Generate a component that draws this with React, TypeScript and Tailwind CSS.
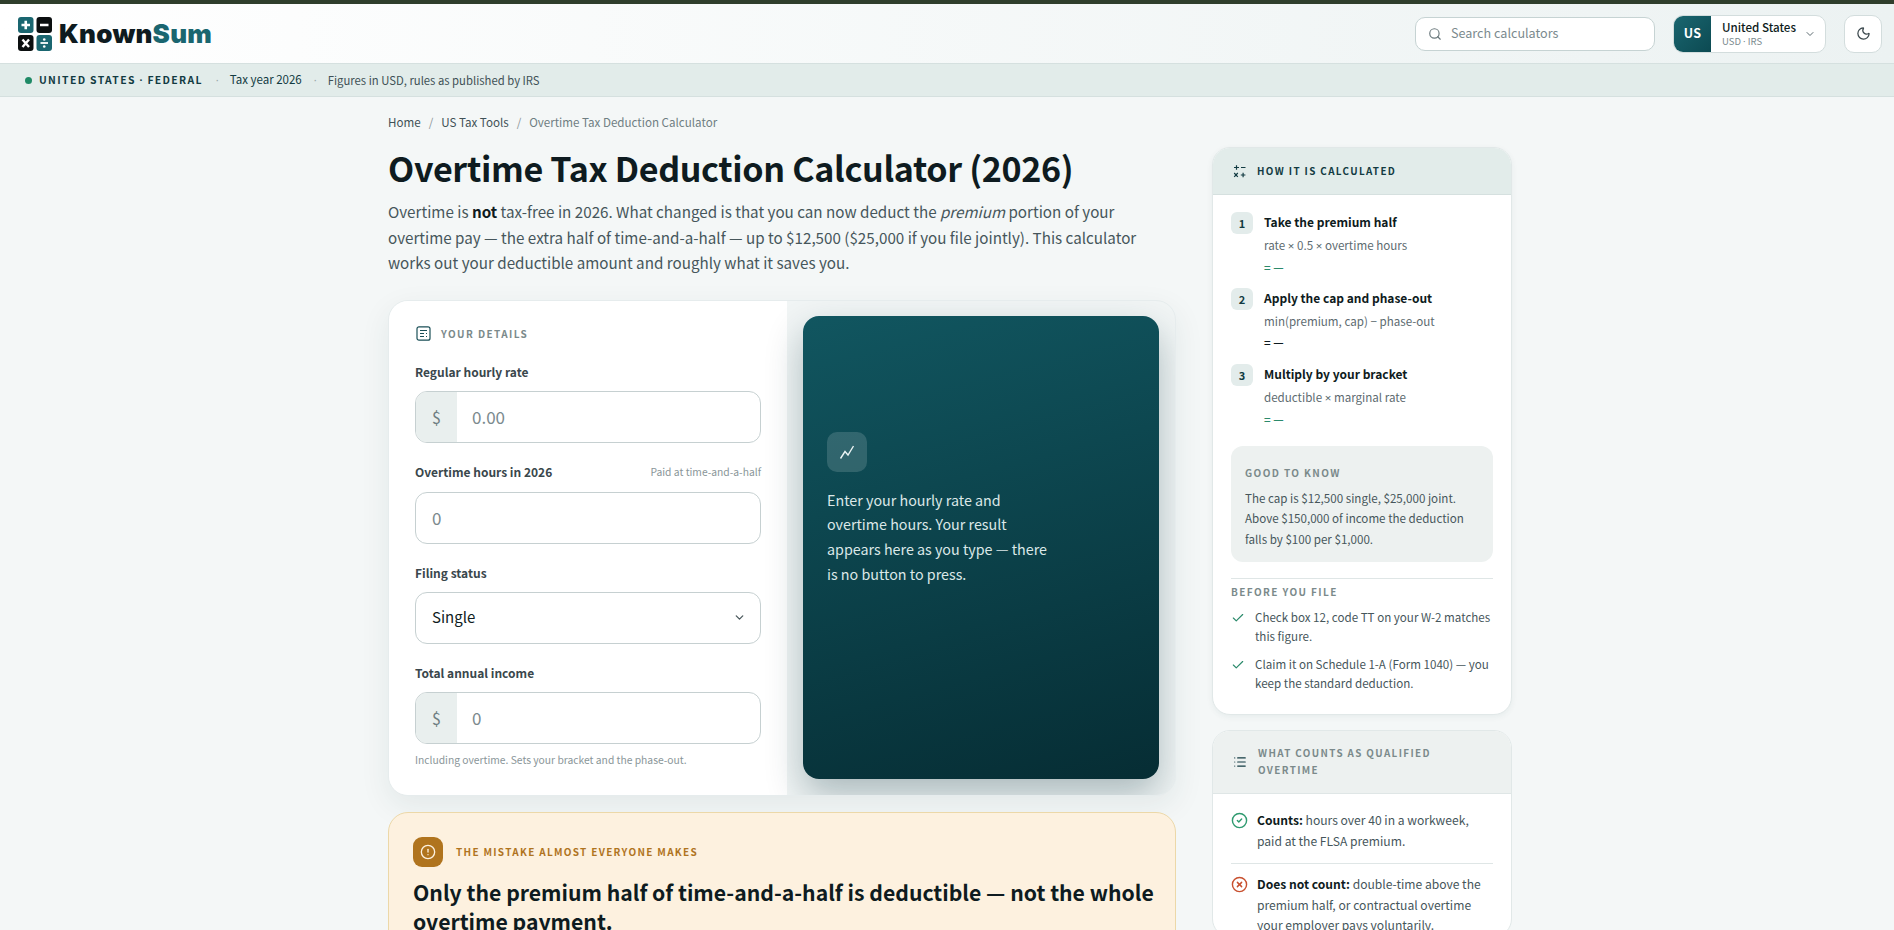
import { Search, Moon, ChevronDown, Check, CircleCheck, CircleX, List, CircleAlert } from 'lucide-react';

const steps = [
  { n: 1, title: 'Take the premium half', desc: <>rate <Narrow>×</Narrow> 0.5 <Narrow>×</Narrow> overtime hours</>, color: 'text-[#2b8a6b]' },
  { n: 2, title: 'Apply the cap and phase-out', desc: <>min(premium, cap) − phase-out</>, color: 'text-[#0e1b20]' },
  { n: 3, title: 'Multiply by your bracket', desc: <>deductible <Narrow>×</Narrow> marginal rate</>, color: 'text-[#2b8a6b]' },
];

// the CJK face has very wide × and · glyphs
function Narrow({ children }: { children: string }) {
  return <span className="[font-family:'Noto_Sans',sans-serif]">{children}</span>;
}

function Logo() {
  return (
    <svg width="34" height="34" viewBox="0 0 34 34" className="shrink-0">
      <rect x="0" y="0" width="15.5" height="16" rx="3" fill="#1a6670" />
      <rect x="18.5" y="0" width="15.5" height="16" rx="3" fill="#0b0f10" />
      <rect x="0" y="18" width="15.5" height="16" rx="3" fill="#0b0f10" />
      <rect x="18.5" y="18" width="15.5" height="16" rx="3" fill="#1a6670" />
      <path d="M3.5 8h8.5M7.75 3.8v8.4M22 8h8.5" stroke="#fff" strokeWidth="2.6" />
      <path d="M4.5 22.5l6.5 7.5M11 22.5l-6.5 7.5" stroke="#fff" strokeWidth="2.4" />
      <path d="M22.5 26h7.5" stroke="#fff" strokeWidth="1.8" />
      <circle cx="26.25" cy="22.5" r="1.3" fill="#fff" />
      <circle cx="26.25" cy="29.5" r="1.3" fill="#fff" />
    </svg>
  );
}

function Prefix() {
  return (
    <span className="w-[41px] shrink-0 flex items-center justify-center bg-[#e9efee] text-[#6f7e82] text-[16px]">$</span>
  );
}

export default function App() {
  return (
    <div className="h-[930px] overflow-hidden bg-[#f4f7f7] text-[#0e1b20] [font-family:'Noto_Sans_CJK_SC',sans-serif]">
      <div className="h-1 bg-[#2f3e2c]" />

      {/* Header */}
      <header className="h-[59px] flex items-center justify-between pl-[18px] pr-3 bg-gradient-to-r from-white to-[#ecf2f2]">
        <div className="flex items-center gap-[7px]">
          <Logo />
          <span className="text-[26px] font-black leading-none tracking-[0.01em] [font-family:Inter,sans-serif]">
            Known<span className="text-[#1a6670]">Sum</span>
          </span>
        </div>
        <div className="flex items-center">
          <div className="w-[240px] h-[34px] flex items-center gap-[9px] pl-[12px] bg-white border border-[#c6d3d3] rounded-[10px]">
            <Search size={14} className="text-[#6b797d]" />
            <span className="text-[12.6px] text-[#7b8a8e]">Search calculators</span>
          </div>
          <div className="ml-[18px] w-[153px] h-[38px] flex bg-white border border-[#d3dddd] rounded-[10px] overflow-hidden">
            <span className="w-[37px] flex items-center justify-center bg-gradient-to-br from-[#1a6670] to-[#0c4a52] text-white text-[12.5px] font-bold tracking-[0.02em]">US</span>
            <div className="flex-1 pl-[11px] flex flex-col justify-center whitespace-nowrap">
              <span className="text-[11.6px] font-medium leading-[15px]">United States</span>
              <span className="text-[9.5px] leading-[13px] text-[#7b8a8e]">USD <Narrow>·</Narrow> IRS</span>
            </div>
            <ChevronDown size={12} className="self-center mr-[9px] text-[#5d6b70]" />
          </div>
          <button className="ml-[18px] w-[38px] h-[38px] flex items-center justify-center bg-white border border-[#d3dddd] rounded-[10px] text-[#3a474c]">
            <Moon size={15} />
          </button>
        </div>
      </header>

      {/* Region strip */}
      <div className="h-[34px] flex items-center pl-[25px] bg-[#e2ecea] border-y border-[#d5e0df]">
        <span className="w-[7px] h-[7px] rounded-full bg-[#1f8a66]" />
        <span className="ml-[7px] text-[10.4px] font-bold tracking-[0.13em] text-[#123b42]">UNITED STATES <Narrow>·</Narrow> FEDERAL</span>
        <span className="ml-[13px] w-[3px] text-[11px] text-[#9aa8aa] [font-family:'Noto_Sans',sans-serif]">·</span>
        <span className="ml-[11px] text-[11.5px] text-[#123b42]">Tax year 2026</span>
        <span className="ml-[12px] w-[3px] text-[11px] text-[#9aa8aa] [font-family:'Noto_Sans',sans-serif]">·</span>
        <span className="ml-[11px] text-[11.3px] text-[#3f5156]">Figures in USD, rules as published by IRS</span>
      </div>

      <div className="ml-[388px] w-[1124px] flex items-start gap-9">
        {/* Main column */}
        <main className="w-[788px] shrink-0">
          <nav className="mt-[16px] flex items-center text-[11.6px] leading-[18px] text-[#3f5156]">
            <span>Home</span>
            <span className="mx-[8px] text-[#8a9699]">/</span>
            <span>US Tax Tools</span>
            <span className="mx-[8px] text-[#8a9699]">/</span>
            <span className="text-[#6f7e82]">Overtime Tax Deduction Calculator</span>
          </nav>

          <h1 className="mt-[13px] text-[34.1px] leading-[46px] font-bold tracking-[-0.01em] text-[#0e1b20]">
            Overtime Tax Deduction Calculator (2026)
          </h1>

          <p className="mt-[9px] text-[15.2px] leading-[25.5px] text-[#46565b]">
            Overtime is <strong className="font-bold text-[#0e1b20]">not</strong> tax-free in 2026. What changed is that you can now deduct the <em>premium</em> portion of your overtime pay — the extra half of time-and-a-half — up to $12,500 ($25,000 if you file jointly). This calculator works out your deductible amount and roughly what it saves you.
          </p>

          {/* Calculator */}
          <section className="mt-[24px] h-[496px] flex rounded-[20px] border border-[#e6eced] bg-[#f1f5f5] shadow-[0_10px_30px_rgba(20,60,70,0.08)] overflow-hidden">
            <div className="w-[398px] shrink-0 bg-white pl-[26px] pr-[26px] pt-[20px]">
              <div className="flex items-center gap-[10px] h-[26px] pl-px">
                <svg width="15" height="15" viewBox="0 0 15 15" fill="none" stroke="#1a4f57" strokeWidth="1.2">
                  <rect x="1" y="0.8" width="13" height="13.4" rx="2" />
                  <path d="M4 4.5h7M4 7.5h4M4 10.5h4M10 7.5h1M10 10.5h1" />
                </svg>
                <span className="text-[10px] font-bold tracking-[0.14em] text-[#7b8a8b]">YOUR DETAILS</span>
              </div>

              <label className="mt-[15px] flex h-[20px] items-center text-[12px] font-bold text-[#3a474c]">Regular hourly rate</label>
              <div className="mt-[9px] h-[52px] flex border border-[#c6d0d1] rounded-[12px] overflow-hidden">
                <Prefix />
                <input placeholder="0.00" className="flex-1 min-w-0 pl-[15px] text-[17px] outline-none placeholder:text-[#7b8a8e]" />
              </div>

              <div className="mt-[19px] flex h-[20px] items-center justify-between">
                <label className="text-[12px] font-bold text-[#3a474c]">Overtime hours in 2026</label>
                <span className="text-[10.3px] text-[#8a9699]">Paid at time-and-a-half</span>
              </div>
              <input placeholder="0" className="mt-[10px] block w-full h-[52px] pl-[16px] border border-[#c6d0d1] rounded-[12px] text-[17px] outline-none placeholder:text-[#7b8a8e]" />

              <label className="mt-[19px] flex h-[20px] items-center text-[12px] font-bold text-[#3a474c]">Filing status</label>
              <div className="relative mt-[9px]">
                <select className="block w-full h-[52px] pl-[16px] appearance-none border border-[#c6d0d1] rounded-[12px] bg-white text-[15px] text-[#0e1b20] outline-none">
                  <option>Single</option>
                </select>
                <ChevronDown size={13} strokeWidth={2.4} className="absolute right-[15px] top-[19px] text-[#4a585c]" />
              </div>

              <label className="mt-[19px] flex h-[20px] items-center text-[12px] font-bold text-[#3a474c]">Total annual income</label>
              <div className="mt-[9px] h-[52px] flex border border-[#c6d0d1] rounded-[12px] overflow-hidden">
                <Prefix />
                <input placeholder="0" className="flex-1 min-w-0 pl-[15px] text-[17px] outline-none placeholder:text-[#7b8a8e]" />
              </div>
              <p className="mt-[7px] text-[10.3px] leading-[18px] text-[#8a9699]">Including overtime. Sets your bracket and the phase-out.</p>
            </div>

            <div className="flex-1 pl-[16px] pr-4 pt-[15px]">
              <div className="h-[463px] px-6 pt-[116px] rounded-[16px] bg-[linear-gradient(165deg,#115660,#062d34)] shadow-[0_16px_36px_rgba(10,50,60,0.3)]">
                <div className="w-10 h-10 flex items-center justify-center rounded-[10px] bg-white/15">
                  <svg width="16" height="16" viewBox="0 0 16 16" fill="none" stroke="#eaf3f3" strokeWidth="1.4">
                    <path d="M1.5 14.5L6 7.5L9 11L14.5 2" />
                  </svg>
                </div>
                <p className="mt-[16px] w-[224px] text-[14.3px] leading-[24.8px] text-[#dce8e8]">
                  Enter your hourly rate and overtime hours. Your result appears here as you type — there is no button to press.
                </p>
              </div>
            </div>
          </section>

          {/* Warning */}
          <section className="mt-4 rounded-[20px] border border-[#ecd8a8] bg-[#fdf1df] pl-6 pr-4 pt-6 pb-6">
            <div className="flex items-center gap-[13px]">
              <span className="w-[30px] h-[30px] flex items-center justify-center rounded-[9px] bg-[#b0741e] text-[#fdf1df]">
                <CircleAlert size={16} />
              </span>
              <span className="text-[10px] font-bold tracking-[0.13em] text-[#b0741e]">THE MISTAKE ALMOST EVERYONE MAKES</span>
            </div>
            <h2 className="mt-[10px] text-[21.2px] leading-[29px] font-bold text-[#0e1b20]">
              Only the premium half of time-and-a-half is deductible — not the whole overtime payment.
            </h2>
          </section>
        </main>

        {/* Sidebar */}
        <aside className="w-[300px] shrink-0 mt-[50px]">
          <div className="rounded-[18px] border border-[#e1e8e8] bg-white shadow-[0_2px_6px_rgba(20,60,70,0.06)] overflow-hidden">
            <div className="h-[47px] flex items-center gap-[11px] pl-[20px] bg-[#e2ecea] border-b border-[#d5e0df]">
              <svg width="13" height="14" viewBox="0 0 13 14" fill="none" stroke="#123b42" strokeWidth="1.2" className="shrink-0">
                <path d="M1 3.5h5M8 3.5h4.5M3.5 1.2v4.6" />
                <path d="M1.2 9l3.6 3.8M4.8 9l-3.6 3.8M7.8 11h4.6M10.1 8.7v4.6" />
              </svg>
              <span className="text-[9.85px] font-bold tracking-[0.14em] text-[#123b42]">HOW IT IS CALCULATED</span>
            </div>

            <div className="px-[18px] pt-[17px] pb-[21px]">
              <div className="flex flex-col gap-[10px]">
                {steps.map(s => (
                  <div key={s.n} className="flex gap-[11px] h-[66px]">
                    <span className="w-[22px] h-[22px] shrink-0 flex items-center justify-center rounded-[6px] bg-[#e3eceb] text-[11px] font-bold text-[#123b42]">{s.n}</span>
                    <div>
                      <div className="text-[12px] leading-[20px] font-bold text-[#0e1b20]">{s.title}</div>
                      <div className="mt-[2px] text-[11.6px] leading-[22px] text-[#5d6b70]">{s.desc}</div>
                      <div className={`text-[11.6px] leading-[21px] font-medium ${s.color}`}>= —</div>
                    </div>
                  </div>
                ))}
              </div>

              <div className="mt-[16px] h-[116px] rounded-[12px] bg-[#edf1f0] px-[14px] pt-[17px]">
                <div className="text-[10px] leading-[20px] font-bold tracking-[0.14em] text-[#7b8a8b]">GOOD TO KNOW</div>
                <p className="mt-[5px] text-[11.6px] leading-[20.4px] text-[#46565b]">
                  The cap is $12,500 single, $25,000 joint. Above $150,000 of income the deduction falls by $100 per $1,000.
                </p>
              </div>

              <div className="mt-[16px] border-t border-[#dfe6e6] pt-[3px]">
                <div className="text-[10px] leading-[20px] font-bold tracking-[0.14em] text-[#7b8a8b]">BEFORE YOU FILE</div>
                <ul className="mt-[6px] flex flex-col gap-[9px]">
                  <li className="flex gap-[10px]">
                    <Check size={14} className="mt-[3px] shrink-0 text-[#2b8a6b]" />
                    <span className="text-[11.6px] leading-[19px] text-[#46565b]">Check box 12, code TT on your W-2 matches this figure.</span>
                  </li>
                  <li className="flex gap-[10px]">
                    <Check size={14} className="mt-[3px] shrink-0 text-[#2b8a6b]" />
                    <span className="text-[11.6px] leading-[19px] text-[#46565b]">Claim it on Schedule 1-A (Form 1040) — you keep the standard deduction.</span>
                  </li>
                </ul>
              </div>
            </div>
          </div>

          <div className="mt-[15px] rounded-[18px] border border-[#e1e8e8] bg-white overflow-hidden">
            <div className="h-[63px] flex items-center gap-[11px] pl-[20px] pr-4 bg-[#edf1f0] border-b border-[#dfe6e6]">
              <List size={14} className="shrink-0 text-[#123b42]" />
              <span className="text-[9.85px] leading-[17px] font-bold tracking-[0.14em] text-[#7b8a8b]">WHAT COUNTS AS QUALIFIED OVERTIME</span>
            </div>
            <div className="px-[18px] pt-[16px]">
              <div className="flex gap-[9px] pb-[12px] border-b border-[#dfe6e6]">
                <CircleCheck size={17} className="mt-[2px] shrink-0 text-[#2e9a6f]" />
                <p className="text-[12.1px] leading-[20.5px] text-[#46565b]"><strong className="font-bold text-[#0e1b20]">Counts:</strong> hours over 40 in a workweek, paid at the FLSA premium.</p>
              </div>
              <div className="flex gap-[9px] pt-[10px]">
                <CircleX size={17} className="mt-[2px] shrink-0 text-[#c8502f]" />
                <p className="text-[12.1px] leading-[20.5px] text-[#46565b]"><strong className="font-bold text-[#0e1b20]">Does not count:</strong> double-time above the premium half, or contractual overtime your employer pays voluntarily.</p>
              </div>
            </div>
          </div>
        </aside>
      </div>
    </div>
  );
}
